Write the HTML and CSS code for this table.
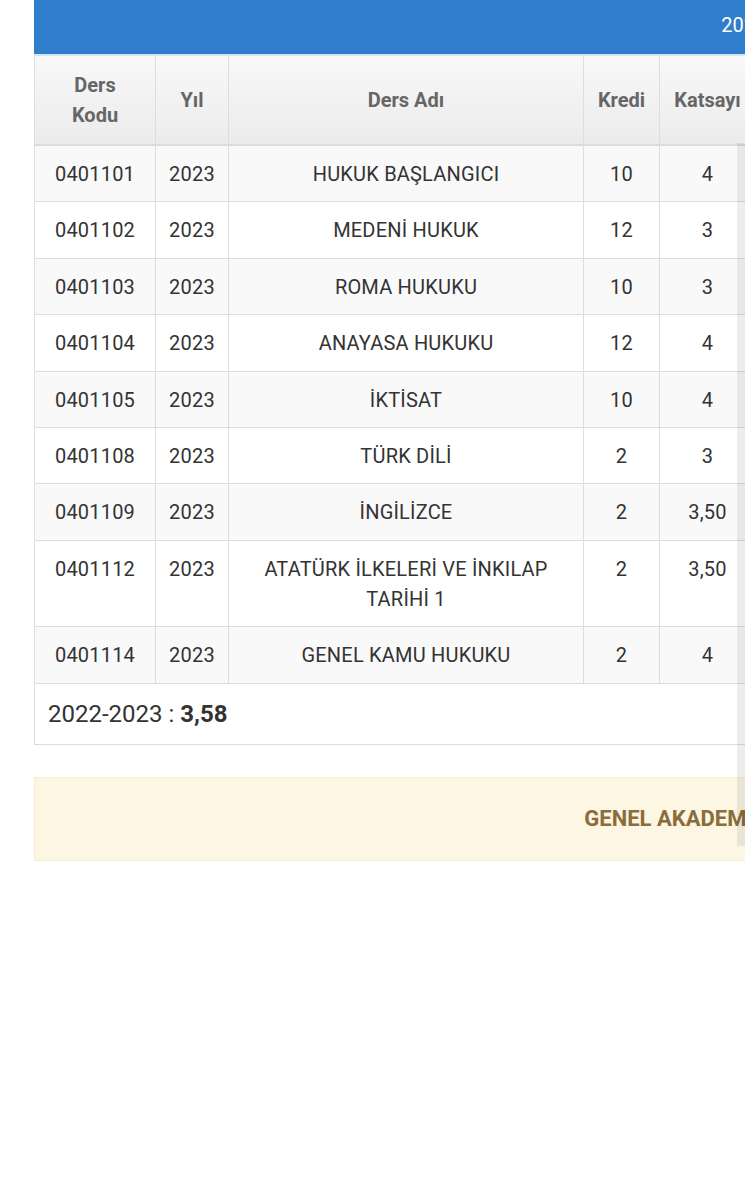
FILE: index.html
```html
<!DOCTYPE html>
<html lang="tr">
<head>
<meta charset="utf-8">
<link rel="stylesheet" href="styles.css">
</head>
<body>
<div class="page">
  <div class="panel">
    <div class="panel-heading">2022-2023</div>
    <table class="grades">
      <colgroup>
        <col class="c-kod"><col class="c-yil"><col class="c-ad"><col class="c-kredi"><col class="c-kat"><col class="c-rest">
      </colgroup>
      <thead>
        <tr><th>Ders<br>Kodu</th><th>Yıl</th><th>Ders Adı</th><th>Kredi</th><th>Katsayı</th><th></th></tr>
      </thead>
      <tbody>
        <tr><td>0401101</td><td>2023</td><td>HUKUK BAŞLANGICI</td><td>10</td><td>4</td><td></td></tr>
        <tr><td>0401102</td><td>2023</td><td>MEDENİ HUKUK</td><td>12</td><td>3</td><td></td></tr>
        <tr><td>0401103</td><td>2023</td><td>ROMA HUKUKU</td><td>10</td><td>3</td><td></td></tr>
        <tr><td>0401104</td><td>2023</td><td>ANAYASA HUKUKU</td><td>12</td><td>4</td><td></td></tr>
        <tr><td>0401105</td><td>2023</td><td>İKTİSAT</td><td>10</td><td>4</td><td></td></tr>
        <tr><td>0401108</td><td>2023</td><td>TÜRK DİLİ</td><td>2</td><td>3</td><td></td></tr>
        <tr><td>0401109</td><td>2023</td><td>İNGİLİZCE</td><td>2</td><td>3,50</td><td></td></tr>
        <tr><td>0401112</td><td>2023</td><td>ATATÜRK İLKELERİ VE İNKILAP TARİHİ 1</td><td>2</td><td>3,50</td><td></td></tr>
        <tr><td>0401114</td><td>2023</td><td>GENEL KAMU HUKUKU</td><td>2</td><td>4</td><td></td></tr>
      </tbody>
    </table>
    <div class="panel-footer">2022-2023 : <b>3,58</b></div>
  </div>
  <div class="alert">GENEL AKADEMİK ORTALAMA : 3,58</div>
</div>
<div class="scroll-thumb"></div>
</body>
</html>
```
FILE: styles.css
```css
html, body {
  margin: 0;
  padding: 0;
  overflow: hidden;
  background: #ffffff;
}
body {
  font-family: Roboto, "Liberation Sans", sans-serif;
  color: #333333;
  width: 745px;
  height: 1200px;
  position: relative;
}
.page {
  padding-left: 34px;
  width: 1466px;
}
.panel {
  width: 1466px;
}
.panel-heading {
  background: #2f7ecb;
  color: #ffffff;
  font-size: 20px;
  line-height: 30px;
  height: 56px;
  box-sizing: border-box;
  padding: 10px 0 0 4px;
  text-align: center;
  border-bottom: 2px solid #d6e4f2;
}
.grades {
  width: 100%;
  border-collapse: collapse;
  table-layout: fixed;
  font-size: 20px;
}
.c-kod { width: 121px; }
.c-yil { width: 73px; }
.c-ad { width: 355px; }
.c-kredi { width: 76px; }
.c-kat { width: 96px; }
.grades th {
  background: linear-gradient(#f8f8f8, #ebebeb);
  color: #666666;
  font-weight: 700;
  line-height: 30px;
  padding: 14px 6px 14px;
  border: 1px solid #dddddd;
  border-top: none;
  border-bottom: 2px solid #dcdcdc;
}
.grades td {
  text-align: center;
  vertical-align: top;
  line-height: 30px;
  padding: 13px 6px 12.4px;
  border: 1px solid #dddddd;
  color: #333333;
  letter-spacing: 0.2px;
}
.grades tbody tr:nth-child(odd) td {
  background: #f9f9f9;
}
.panel-footer {
  font-size: 24px;
  line-height: 30px;
  padding: 15px 14px 15px 13px;
  border: 1px solid #dddddd;
  border-top: none;
  color: #333333;
}
.panel-footer b {
  font-weight: 700;
}
.alert {
  margin-top: 32px;
  width: 1466px;
  box-sizing: border-box;
  background: #fcf6e3;
  border: 1px solid #f6ecd2;
  color: #8a6d3b;
  font-weight: 700;
  font-size: 22px;
  line-height: 30px;
  padding: 26px 0;
  text-align: center;
}
.scroll-thumb {
  position: absolute;
  left: 737px;
  top: 143px;
  width: 8px;
  height: 703px;
  background: rgba(0, 0, 0, 0.07);
}
```
